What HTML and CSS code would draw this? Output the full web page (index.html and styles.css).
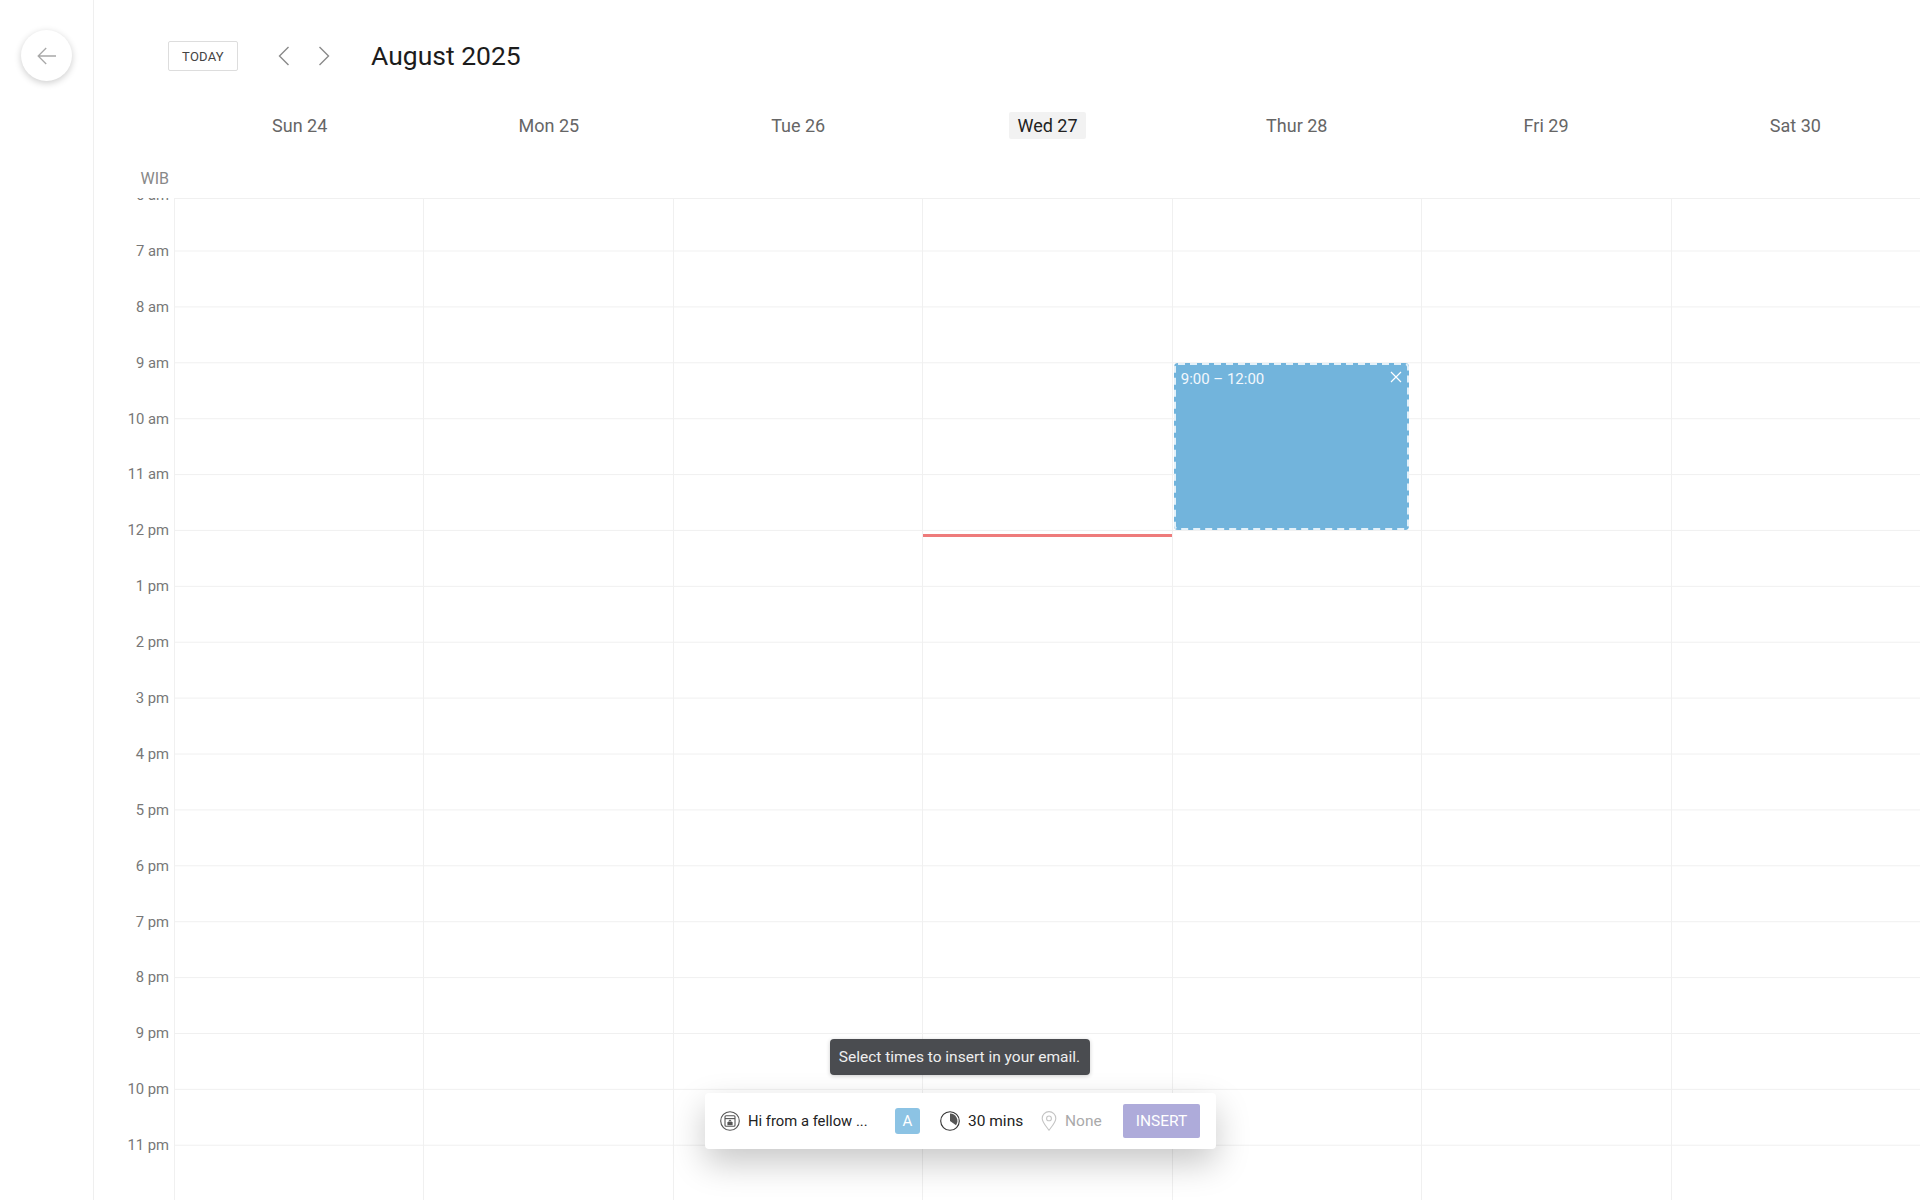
FILE: index.html
```html
<!DOCTYPE html>
<html lang="en">

<head>
	<meta charset="UTF-8">
	<title>August 2025</title>
	<link rel="stylesheet" href="styles.css">
</head>

<body>
	<aside class="rail">
		<button class="back" aria-label="Back">
			<svg width="20" height="18" viewBox="0 0 20 18" fill="none" stroke="#a8a8a8" stroke-width="1.3">
				<path d="M19 9H1.5M9.2 1 1.2 9l8 8" />
			</svg>
		</button>
	</aside>

	<main class="calendar">
		<header class="toolbar">
			<button class="today">TODAY</button>
			<div class="arrows">
				<svg width="12" height="20" viewBox="0 0 12 20" fill="none" stroke="#8a8a8a" stroke-width="1.4">
					<path d="M10.5 1 1.5 10l9 9" />
				</svg>
				<svg width="12" height="20" viewBox="0 0 12 20" fill="none" stroke="#8a8a8a" stroke-width="1.4">
					<path d="M1.5 1l9 9-9 9" />
				</svg>
			</div>
			<h1>August 2025</h1>
		</header>

		<div class="days-head">
			<div class="day-name"><span>Sun 24</span></div>
			<div class="day-name"><span>Mon 25</span></div>
			<div class="day-name"><span>Tue 26</span></div>
			<div class="day-name current"><span>Wed 27</span></div>
			<div class="day-name"><span>Thur 28</span></div>
			<div class="day-name"><span>Fri 29</span></div>
			<div class="day-name"><span>Sat 30</span></div>
		</div>

		<div class="zone">WIB</div>

		<div class="week">
			<div class="hours">
				<div>6 am</div>
				<div>7 am</div>
				<div>8 am</div>
				<div>9 am</div>
				<div>10 am</div>
				<div>11 am</div>
				<div>12 pm</div>
				<div>1 pm</div>
				<div>2 pm</div>
				<div>3 pm</div>
				<div>4 pm</div>
				<div>5 pm</div>
				<div>6 pm</div>
				<div>7 pm</div>
				<div>8 pm</div>
				<div>9 pm</div>
				<div>10 pm</div>
				<div>11 pm</div>
			</div>
			<div class="columns">
				<div class="column"></div>
				<div class="column"></div>
				<div class="column"></div>
				<div class="column">
					<div class="now-line"></div>
				</div>
				<div class="column">
					<div class="slot">
						<svg class="slot-dashes" width="235" height="167" fill="none" stroke="#e4f1f9" stroke-width="2" stroke-dasharray="7 5">
							<rect x="1" y="1" width="233" height="165" rx="3" />
						</svg>
						<span>9:00 – 12:00</span>
						<svg width="12" height="12" viewBox="0 0 12 12" fill="none" stroke="#fff" stroke-width="1.2">
							<path d="M1 1l10 10M11 1 1 11" />
						</svg>
					</div>
				</div>
				<div class="column"></div>
				<div class="column"></div>
			</div>
		</div>

		<div class="insert-wrap">
			<div class="tip">Select times to insert in your email.</div>
			<div class="insert-bar">
				<div class="item title">
					<svg width="20" height="20" viewBox="0 0 20 20" fill="none" stroke="#555" stroke-width="1.1">
						<circle cx="10" cy="10" r="9.3" />
						<rect x="5" y="4.8" width="10" height="10.4" rx="1" />
						<path d="M5 7.6h10" />
						<path d="M7.4 11h5.2v3.2H7.4z" fill="#555" stroke="none" />
						<path d="M10 8.6l2 2H8z" fill="#555" stroke="none" />
					</svg>
					<span>Hi from a fellow ...</span>
				</div>
				<div class="badge">A</div>
				<div class="item length">
					<svg width="20" height="20" viewBox="0 0 20 20" fill="none" stroke="#333" stroke-width="1.1">
						<circle cx="10" cy="10" r="9.3" />
						<path d="M10 2.6a7.4 7.4 0 0 1 6 11.7L10 10z" fill="#555" stroke="none" />
					</svg>
					<span>30 mins</span>
				</div>
				<div class="item place">
					<svg width="16" height="20" viewBox="0 0 16 20" fill="none" stroke="#c4c4c4" stroke-width="1.1">
						<path d="M8 19.2C4.6 14.6 1.2 11 1.2 7.4a6.8 6.8 0 0 1 13.6 0c0 3.6-3.4 7.2-6.8 11.8z" />
						<circle cx="8" cy="7.4" r="2.4" />
					</svg>
					<span>None</span>
				</div>
				<button class="insert">INSERT</button>
			</div>
		</div>
	</main>
</body>

</html>
```

FILE: styles.css
```css
* {
	box-sizing: border-box;
}

html,
body {
	height: 100%;
}

body {
	margin: 0;
	display: flex;
	overflow: hidden;
	background: white;
	color: #222;
	font-family: Roboto, "Liberation Sans", sans-serif;
}

button {
	font-family: inherit;
}

.rail {
	flex: 0 0 94px;
	padding: 30px 0 0 21px;
	border-right: 1px solid #efefef;
}

.back {
	display: flex;
	align-items: center;
	justify-content: center;
	width: 51px;
	height: 51px;
	padding: 0;
	border: none;
	border-radius: 50%;
	background: white;
	box-shadow: 0 2px 7px rgba(0, 0, 0, 0.2);
}

.calendar {
	position: relative;
	flex: 1;
	min-width: 0;
	display: flex;
	flex-direction: column;
}

.toolbar {
	display: flex;
	align-items: center;
	height: 112px;
	padding-left: 74px;
}

.today {
	width: 70px;
	height: 30px;
	padding: 0;
	border: 1px solid #ddd;
	border-radius: 2px;
	background: white;
	color: #444;
	font-size: 13px;
	letter-spacing: 0.25px;
}

.arrows {
	display: flex;
	gap: 28px;
	margin-left: 40px;
}

h1 {
	margin: -1px 0 0 41px;
	color: #1c1c1c;
	font-size: 26.5px;
	font-weight: 400;
}

.days-head {
	display: grid;
	grid-template-columns: repeat(7, 1fr);
	margin-left: 81px;
	height: 28px;
}

.day-name {
	text-align: center;
	color: #666;
	font-size: 18px;
	line-height: 27px;
}

.day-name span {
	display: inline-block;
}

.current span {
	padding: 0 8px;
	border-radius: 2px;
	background: #f2f2f2;
	color: #222;
}

.zone {
	width: 75px;
	margin-top: 29px;
	text-align: right;
	color: #888;
	font-size: 16px;
	line-height: 20px;
}

.week {
	flex: 1;
	min-height: 0;
	display: flex;
	margin-top: 9px;
	overflow: hidden;
}

.hours {
	flex: 0 0 80px;
	overflow: hidden;
	padding-right: 5px;
	text-align: right;
	color: #777;
	font-size: 14.8px;
}

.hours div {
	height: 55.9px;
	line-height: 57.5px;
}

.hours div:first-child {
	margin-top: -31px;
}

.columns {
	flex: 1;
	display: grid;
	grid-template-columns: repeat(7, 1fr);
	border-top: 1px solid #f0f0f0;
	background-image: linear-gradient(#f0f0f0 1px, transparent 1px);
	background-size: 100% 55.9px;
	background-position: 0 51.5px;
}

.column {
	position: relative;
	border-left: 1px solid #f0f0f0;
}

.now-line {
	position: absolute;
	top: 335px;
	left: 0;
	right: 0;
	height: 3px;
	background: #ee7b7b;
}

.slot {
	position: absolute;
	top: 164px;
	left: 1px;
	width: 235px;
	height: 167px;
	display: flex;
	justify-content: space-between;
	padding: 7px 7px;
	border-radius: 4px;
	background: #72b4dc;
	color: #f2f8fc;
	font-size: 15px;
}

.slot-dashes {
	position: absolute;
	top: 0;
	left: 0;
}

.slot svg {
	margin-top: 1px;
}

.slot .slot-dashes {
	margin-top: 0;
}

.insert-wrap {
	position: absolute;
	left: 611px;
	top: 1039px;
	width: 511px;
	display: flex;
	flex-direction: column;
	align-items: center;
	gap: 18px;
}

.tip {
	width: 260px;
	height: 36px;
	margin-left: -2px;
	border-radius: 4px;
	background: #4a4c50;
	box-shadow: 0 1px 4px rgba(0, 0, 0, 0.2);
	color: #eee;
	font-size: 15.5px;
	line-height: 36px;
	text-align: center;
}

.insert-bar {
	width: 100%;
	height: 56px;
	display: flex;
	align-items: center;
	padding: 0 16px 0 15px;
	border-radius: 4px;
	background: white;
	box-shadow: 0 14px 34px rgba(0, 0, 0, 0.22);
	font-size: 15.5px;
}

.item {
	display: flex;
	align-items: center;
	gap: 8px;
}

.title {
	width: 175px;
	font-size: 14.8px;
}

.badge {
	width: 25px;
	height: 26px;
	border-radius: 3px;
	background: #8cc3e4;
	color: white;
	font-size: 15px;
	line-height: 26px;
	text-align: center;
}

.length {
	margin-left: 20px;
	width: 101px;
}

.place {
	color: #aaa;
}

.insert {
	width: 77px;
	height: 34px;
	margin-left: auto;
	padding: 0;
	border: none;
	border-radius: 2px;
	background: #aeabda;
	color: white;
	font-size: 15.5px;
}
```
